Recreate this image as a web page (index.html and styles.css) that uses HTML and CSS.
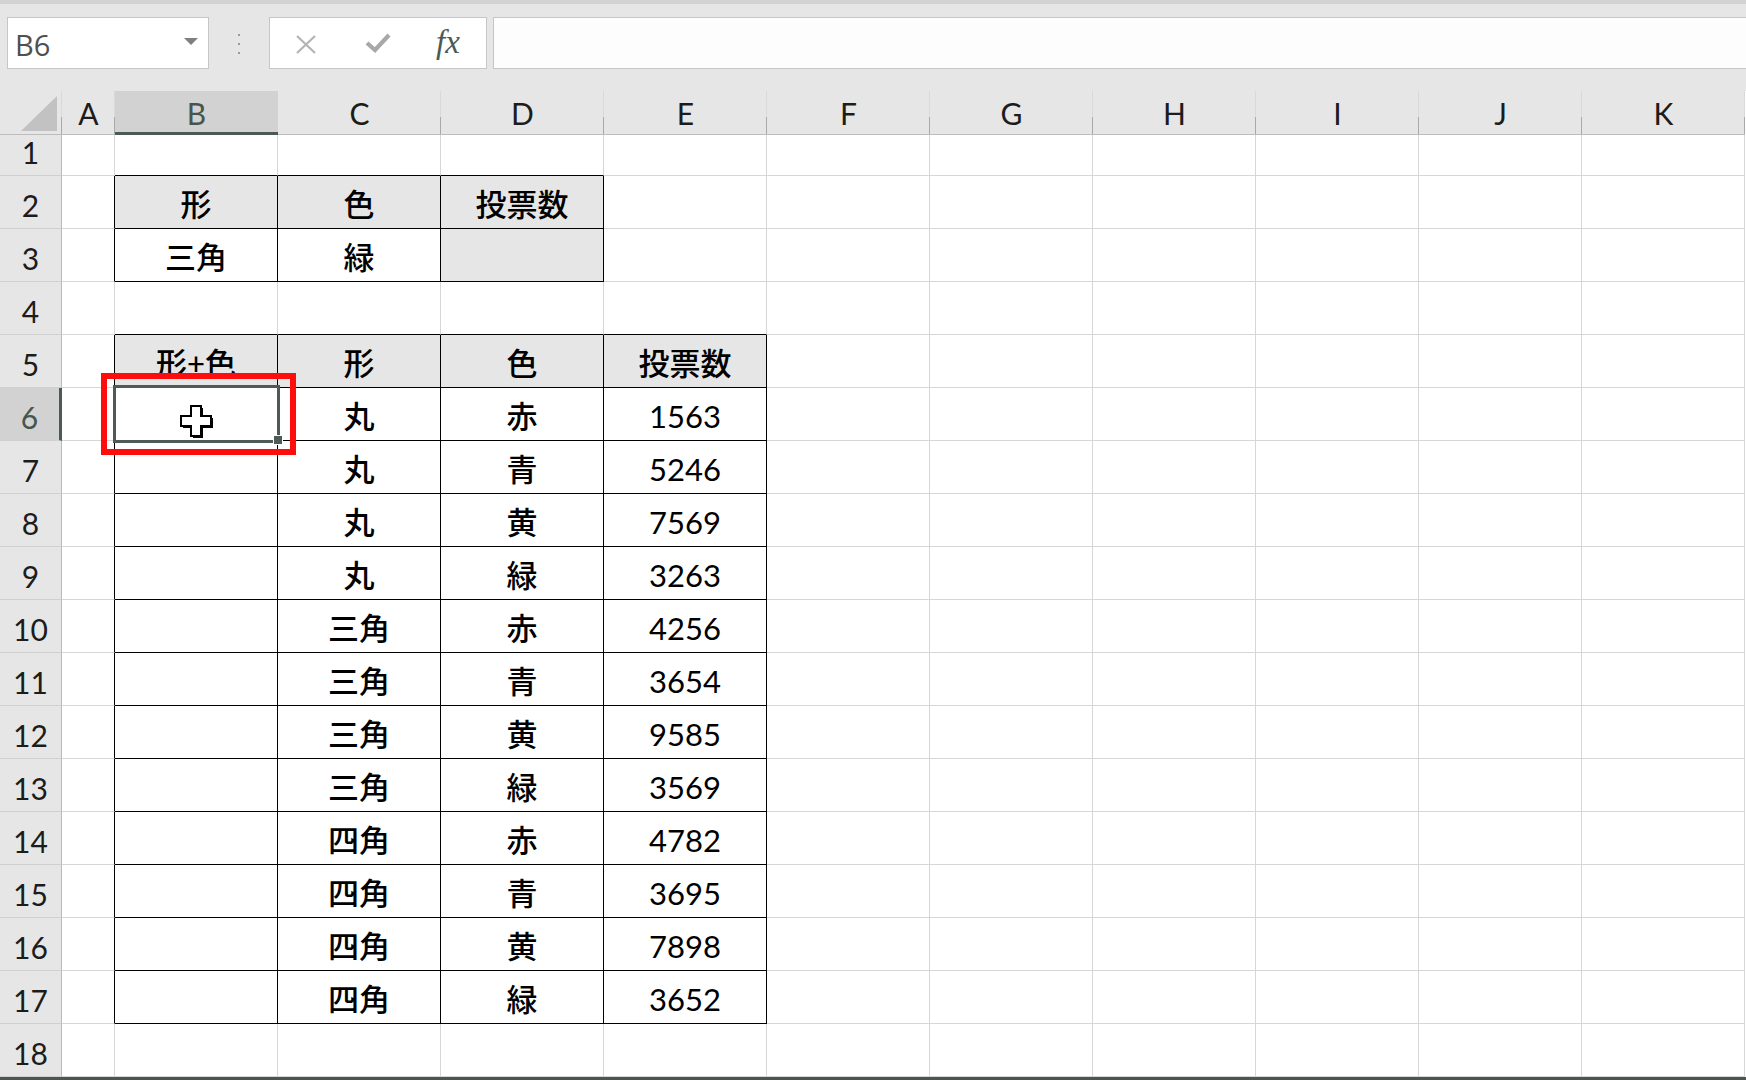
FILE: index.html
```html
<!DOCTYPE html>
<html lang="ja">
<head>
    <meta charset="UTF-8">
    <title>Book1 - Excel</title>
    <link rel="stylesheet" href="styles.css">
</head>
<body>
    <div class="top-strip"></div>
    <div class="formula-bar">
        <div class="name-box">
            <span>B6</span>
            <svg class="name-arrow" width="14" height="7" viewBox="0 0 14 7"><path d="M0 0 H14 L7 7 Z" fill="#7f7f7f"/></svg>
        </div>
        <div class="grip">
            <svg width="4" height="22" viewBox="0 0 4 22"><rect x="1" y="1" width="2" height="2" fill="#9a9a9a"/><rect x="1" y="10" width="2" height="2" fill="#9a9a9a"/><rect x="1" y="19" width="2" height="2" fill="#9a9a9a"/></svg>
        </div>
        <div class="fx-buttons">
            <svg class="btn-cancel" width="22" height="19" viewBox="0 0 22 19"><path d="M2 1 L20 18 M20 1 L2 18" stroke="#b4b4b4" stroke-width="2.2" fill="none"/></svg>
            <svg class="btn-enter" width="26" height="20" viewBox="0 0 26 20"><path d="M2 10 L10 17 L24 2" stroke="#a8a8a8" stroke-width="4.2" fill="none"/></svg>
            <span class="btn-fx">fx</span>
        </div>
        <div class="formula-input"></div>
    </div>

    <table class="sheet">
        <thead>
            <tr>
                <th class="corner"><svg width="38" height="37" viewBox="0 0 38 37"><path d="M1 36 L37 1 V36 Z" fill="#c2c2c2"/></svg></th>
                <th class="col-a">A</th>
                <th class="col sel">B</th>
                <th class="col">C</th>
                <th class="col">D</th>
                <th class="col">E</th>
                <th class="col">F</th>
                <th class="col">G</th>
                <th class="col">H</th>
                <th class="col">I</th>
                <th class="col">J</th>
                <th class="col">K</th>
            </tr>
        </thead>
        <tbody>
            <tr class="first">
                <th>1</th><td></td><td class="edge-b"></td><td class="edge-b"></td><td class="edge-b"></td><td></td><td></td><td></td><td></td><td></td><td></td><td></td>
            </tr>
            <tr>
                <th>2</th><td class="edge-r"></td><td class="t h">形</td><td class="t h">色</td><td class="t h">投票数</td><td></td><td></td><td></td><td></td><td></td><td></td><td></td>
            </tr>
            <tr>
                <th>3</th><td class="edge-r"></td><td class="t">三角</td><td class="t">緑</td><td class="t h"></td><td></td><td></td><td></td><td></td><td></td><td></td><td></td>
            </tr>
            <tr>
                <th>4</th><td></td><td class="edge-b"></td><td class="edge-b"></td><td class="edge-b"></td><td class="edge-b"></td><td></td><td></td><td></td><td></td><td></td><td></td>
            </tr>
            <tr>
                <th>5</th><td class="edge-r"></td><td class="t h">形+色</td><td class="t h">形</td><td class="t h">色</td><td class="t h">投票数</td><td></td><td></td><td></td><td></td><td></td><td></td>
            </tr>
            <tr>
                <th class="sel">6</th><td class="edge-r"></td>
                <td class="t active">
                    <div class="sel-box"></div>
                    <div class="fill-handle"></div>
                    <div class="red-box"></div>
                    <svg class="cursor" width="34" height="33" viewBox="0 0 34 33">
                        <path d="M13 3 H23 V13 H33 V23 H23 V33 H13 V23 H3 V13 H13 Z" fill="#000"/>
                        <path d="M11 1 H21 V11 H31 V21 H21 V31 H11 V21 H1 V11 H11 Z" fill="#fff" stroke="#000" stroke-width="2"/>
                    </svg>
                </td>
                <td class="t">丸</td><td class="t">赤</td><td class="t num">1563</td><td></td><td></td><td></td><td></td><td></td><td></td>
            </tr>
            <tr>
                <th>7</th><td class="edge-r"></td><td class="t"></td><td class="t">丸</td><td class="t">青</td><td class="t num">5246</td><td></td><td></td><td></td><td></td><td></td><td></td>
            </tr>
            <tr>
                <th>8</th><td class="edge-r"></td><td class="t"></td><td class="t">丸</td><td class="t">黄</td><td class="t num">7569</td><td></td><td></td><td></td><td></td><td></td><td></td>
            </tr>
            <tr>
                <th>9</th><td class="edge-r"></td><td class="t"></td><td class="t">丸</td><td class="t">緑</td><td class="t num">3263</td><td></td><td></td><td></td><td></td><td></td><td></td>
            </tr>
            <tr>
                <th>10</th><td class="edge-r"></td><td class="t"></td><td class="t">三角</td><td class="t">赤</td><td class="t num">4256</td><td></td><td></td><td></td><td></td><td></td><td></td>
            </tr>
            <tr>
                <th>11</th><td class="edge-r"></td><td class="t"></td><td class="t">三角</td><td class="t">青</td><td class="t num">3654</td><td></td><td></td><td></td><td></td><td></td><td></td>
            </tr>
            <tr>
                <th>12</th><td class="edge-r"></td><td class="t"></td><td class="t">三角</td><td class="t">黄</td><td class="t num">9585</td><td></td><td></td><td></td><td></td><td></td><td></td>
            </tr>
            <tr>
                <th>13</th><td class="edge-r"></td><td class="t"></td><td class="t">三角</td><td class="t">緑</td><td class="t num">3569</td><td></td><td></td><td></td><td></td><td></td><td></td>
            </tr>
            <tr>
                <th>14</th><td class="edge-r"></td><td class="t"></td><td class="t">四角</td><td class="t">赤</td><td class="t num">4782</td><td></td><td></td><td></td><td></td><td></td><td></td>
            </tr>
            <tr>
                <th>15</th><td class="edge-r"></td><td class="t"></td><td class="t">四角</td><td class="t">青</td><td class="t num">3695</td><td></td><td></td><td></td><td></td><td></td><td></td>
            </tr>
            <tr>
                <th>16</th><td class="edge-r"></td><td class="t"></td><td class="t">四角</td><td class="t">黄</td><td class="t num">7898</td><td></td><td></td><td></td><td></td><td></td><td></td>
            </tr>
            <tr>
                <th>17</th><td class="edge-r"></td><td class="t"></td><td class="t">四角</td><td class="t">緑</td><td class="t num">3652</td><td></td><td></td><td></td><td></td><td></td><td></td>
            </tr>
            <tr>
                <th>18</th><td></td><td></td><td></td><td></td><td></td><td></td><td></td><td></td><td></td><td></td><td></td>
            </tr>
        </tbody>
    </table>
    <div class="tab-strip"></div>
</body>
</html>
```

FILE: styles.css
```css
html, body {
    margin: 0;
    padding: 0;
}
body {
    width: 1746px;
    height: 1080px;
    overflow: hidden;
    background: #ffffff;
    font-family: Lato, "Noto Sans CJK JP", sans-serif;
}
.top-strip {
    height: 4px;
    background: #d3d3d3;
}
.formula-bar {
    height: 87px;
    box-sizing: border-box;
    padding: 13px 0 0 7px;
    background: #e6e6e6;
    display: flex;
}
.name-box {
    width: 202px;
    height: 52px;
    box-sizing: border-box;
    border: 1px solid #c6c6c6;
    background: #ffffff;
    display: flex;
    align-items: center;
    justify-content: space-between;
    padding: 3px 10px 0 7px;
    font-family: "Open Sans", sans-serif;
    font-size: 29px;
    color: #505050;
}
.name-arrow {
    margin-top: -6px;
}
.grip {
    width: 60px;
    display: flex;
    justify-content: center;
    padding-top: 16px;
    box-sizing: border-box;
}
.fx-buttons {
    width: 218px;
    height: 52px;
    box-sizing: border-box;
    border: 1px solid #c6c6c6;
    background: #ffffff;
    display: flex;
    align-items: center;
    padding: 0 0 0 25px;
}
.btn-cancel {
    margin-top: 2px;
}
.btn-enter {
    margin-left: 48px;
}
.btn-fx {
    margin-left: 45px;
    font-family: "Liberation Serif", serif;
    font-style: italic;
    font-size: 33px;
    color: #4b5a55;
    margin-top: -2px;
}
.formula-input {
    flex: 1;
    height: 52px;
    margin-left: 6px;
    box-sizing: border-box;
    border: 1px solid #c6c6c6;
    border-right: none;
    background: #fdfdfd;
}

/* grid */
.sheet {
    border-collapse: separate;
    border-spacing: 0;
    table-layout: fixed;
    width: 1745px;
    font-size: 31px;
    color: #000000;
}
.sheet th, .sheet td {
    box-sizing: border-box;
    padding: 0;
    text-align: center;
    vertical-align: middle;
    line-height: 1;
}
.sheet thead tr {
    height: 44px;
}
.sheet thead th {
    font-weight: normal;
    font-size: 30px;
    color: #1c1c1c;
    background:
        linear-gradient(#d9d9d9, #d9d9d9) right top / 1px 60% no-repeat,
        linear-gradient(#a9a9a9, #a9a9a9) right bottom / 1px 40% no-repeat,
        #e6e6e6;
    border-bottom: 1px solid #bdbdbd;
    padding-top: 1px;
}
.sheet thead th.corner {
    width: 62px;
    text-align: right;
    vertical-align: bottom;
    padding: 0 4px 2px 0;
}
.corner svg {
    display: block;
    margin-left: auto;
}
.sheet thead th.col-a {
    width: 53px;
}
.sheet thead th.col {
    width: 163px;
}
.sheet thead th.sel {
    background: #d2d2d2;
    color: #46564f;
    border-bottom: 3px solid #4c5a54;
    padding-top: 3px;
}
.sheet tbody tr {
    height: 53px;
}
.sheet tbody tr.first {
    height: 41px;
}
.sheet tbody th {
    font-weight: normal;
    font-size: 30px;
    color: #1c1c1c;
    background: #e6e6e6;
    border-right: 1px solid #bababa;
    border-bottom: 1px solid #d0d0d0;
    vertical-align: bottom;
    padding-bottom: 8px;
}
.sheet tbody th.sel {
    background: #d2d2d2;
    color: #46564f;
    border-right: 3px solid #4c5a54;
}
.sheet td {
    border-right: 1px solid #d6d6d6;
    border-bottom: 1px solid #d6d6d6;
    padding-top: 4px;
    font-weight: 500;
}
.sheet td.num {
    font-weight: normal;
}
.sheet td.edge-r {
    border-right-color: #000000;
}
.sheet td.edge-b {
    border-bottom-color: #000000;
}
.sheet td.t {
    border-right-color: #000000;
    border-bottom-color: #000000;
}
.sheet td.h {
    background: #e7e6e6;
}

/* active cell B6 */
.sheet td.active {
    position: relative;
}
.sel-box {
    position: absolute;
    left: -2px;
    top: -3px;
    width: 167px;
    height: 58px;
    box-sizing: border-box;
    border: 3px solid #4f5b57;
}
.fill-handle {
    position: absolute;
    left: 158px;
    top: 47px;
    width: 8px;
    height: 8px;
    background: #4f5b57;
    border: 1px solid #ffffff;
}
.red-box {
    position: absolute;
    left: -14px;
    top: -15px;
    width: 195px;
    height: 82px;
    box-sizing: border-box;
    border: 6px solid #ff0d0d;
}
.cursor {
    position: absolute;
    left: 65px;
    top: 17px;
}
.tab-strip {
    height: 4px;
    background: #4d5551;
}
```
